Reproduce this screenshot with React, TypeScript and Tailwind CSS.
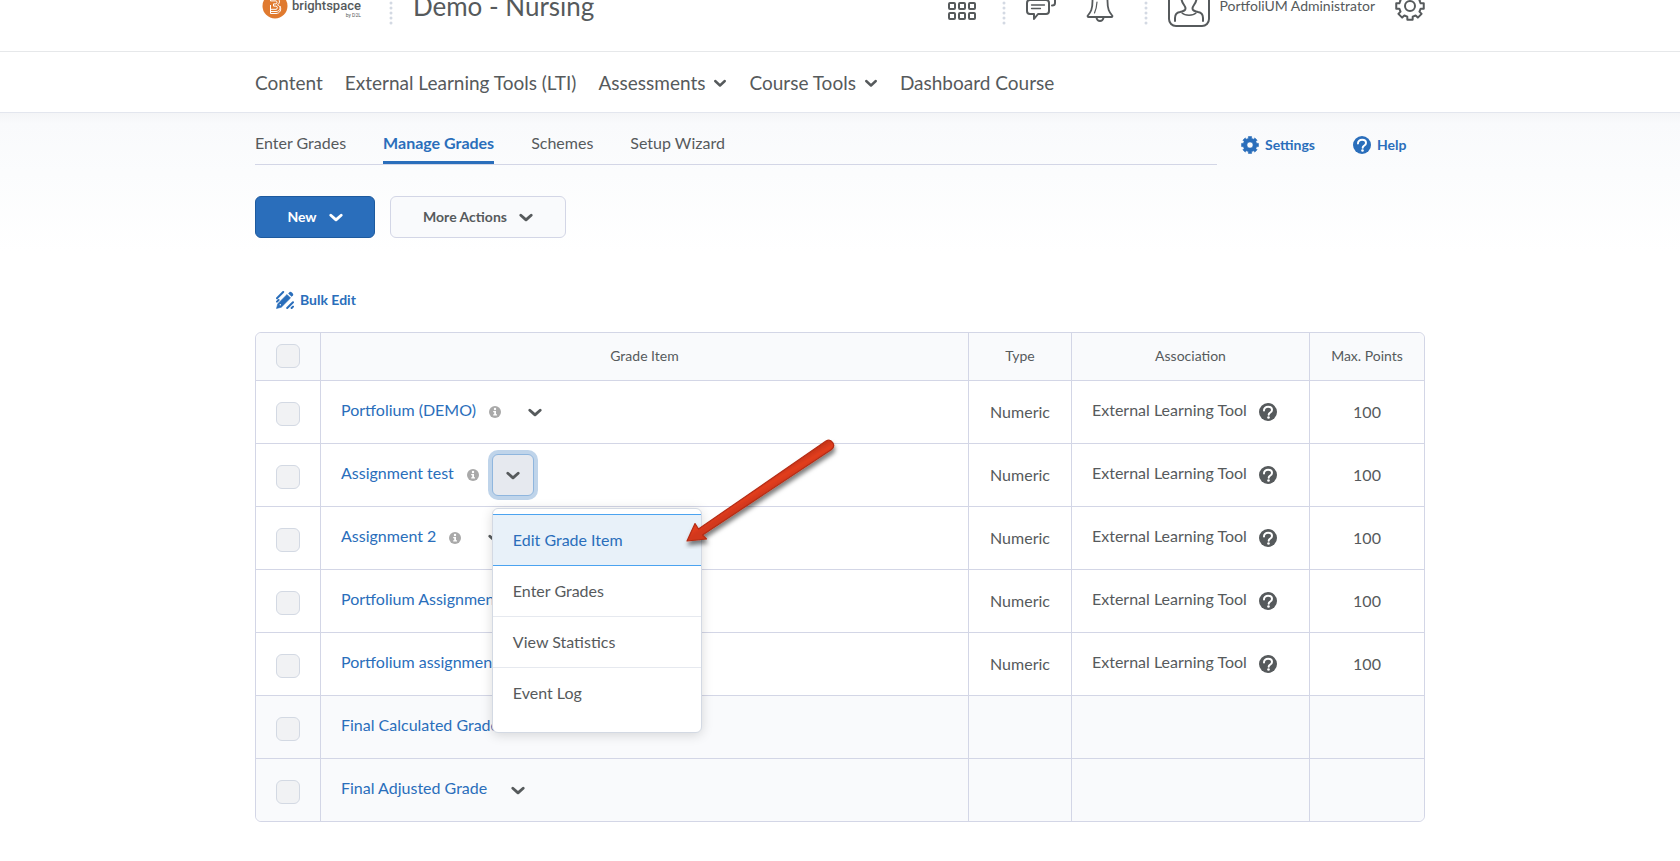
import React from "react";

function Chevron({ className = "", thin = false }: { className?: string; thin?: boolean }) {
  return (
    <svg viewBox="0 0 14 9" width="14" height="9" className={className} fill="none" stroke="currentColor" strokeWidth={thin ? 2.4 : 2.8} strokeLinecap="round" strokeLinejoin="round" aria-hidden="true">
      <path d={thin ? "M2.2 2 7 6.5 11.8 2" : "M1.8 2.2 7 6.9 12.2 2.2"} />
    </svg>
  );
}

function HelpIcon() {
  return (
    <svg viewBox="0 0 18 18" width="18" height="18" className="shrink-0" aria-hidden="true">
      <circle cx="9" cy="9" r="9" fill="currentColor" />
      <path d="M5 7.400C4.900 5 6.800 3.700 9.100 3.700s3.900 1.200 3.900 3.200c0 1.700-1.100 2.300-2.100 2.900-.9.600-1.200 1-1.200 1.900" fill="none" stroke="#fff" strokeWidth="2" strokeLinecap="round" />
      <circle cx="9.500" cy="14.500" r="1.300" fill="#fff" />
    </svg>
  );
}

function InfoIcon() {
  return (
    <svg viewBox="0 0 12 12" width="12" height="12" className="shrink-0 text-[#a9a9a9]" aria-hidden="true">
      <circle cx="6" cy="6" r="6" fill="currentColor" />
      <circle cx="6" cy="3" r="1.200" fill="#fff" />
      <path d="M4.200 5h2.800v3.200h1v1.300H4.200V8.200h1V6.200h-1z" fill="#fff" />
    </svg>
  );
}

function gearPath(c: number, outer: number, inner: number) {
  const pts: string[] = [];
  for (let i = 0; i < 8; i++) {
    const a = (i * Math.PI) / 4;
    const seq: [number, number][] = [[-0.25, inner], [-0.19, outer], [0.19, outer], [0.25, inner]];
    for (const [d, r] of seq) {
      pts.push(`${(c + r * Math.sin(a + d)).toFixed(2)} ${(c - r * Math.cos(a + d)).toFixed(2)}`);
    }
  }
  return `M${pts.join("L")}Z`;
}

function SettingsIcon() {
  return (
    <svg viewBox="0 0 18 18" width="18" height="18" aria-hidden="true">
      <path d={`${gearPath(9, 8.6, 6.8)}M9 5.9a3.1 3.1 0 1 0 0 6.2a3.1 3.1 0 1 0 0-6.2Z`} fill="currentColor" stroke="currentColor" strokeWidth="0.6" strokeLinejoin="round" fillRule="evenodd" />
    </svg>
  );
}

function HeaderGear() {
  return (
    <svg viewBox="0 0 30 30" width="30" height="30" fill="none" stroke="currentColor" strokeWidth="2" strokeLinejoin="round" aria-hidden="true">
      <path d={gearPath(15, 14, 11)} />
      <circle cx="15" cy="15" r="5" />
    </svg>
  );
}

function GridIcon() {
  return (
    <svg viewBox="0 0 28 28" width="28" height="28" fill="none" stroke="currentColor" strokeWidth="2" aria-hidden="true">
      {[1, 11, 21].map((y) => [1, 11, 21].map((x) => <rect key={`${x}-${y}`} x={x} y={y} width="6" height="6" rx="1" />))}
    </svg>
  );
}

function ChatIcon() {
  return (
    <svg viewBox="0 0 30 30" width="30" height="30" fill="none" stroke="currentColor" strokeWidth="2" strokeLinejoin="round" strokeLinecap="round" aria-hidden="true">
      <path d="M4 9h16a3 3 0 0 1 3 3v8a3 3 0 0 1-3 3h-8l-4 5v-5H4a3 3 0 0 1-3-3v-8a3 3 0 0 1 3-3Z" />
      <path d="M7 5V4a3 3 0 0 1 3-3h16a3 3 0 0 1 3 3v8c0 1.500-1 2.500-3 2.500" />
      <path d="M5.500 14h13M5.500 17.500h9" strokeWidth="1.300" />
    </svg>
  );
}

function BellIcon() {
  return (
    <svg viewBox="0 0 28 32" width="28" height="32" fill="none" stroke="currentColor" strokeWidth="1.800" strokeLinejoin="round" strokeLinecap="round" aria-hidden="true">
      <path d="M14 2c-5 0-7.500 4-7.500 9 0 8-1.500 11-5 15 0 .8.500 1 1 1h23c.5 0 1-.2 1-1-3.500-4-5-7-5-15 0-5-2.500-9-7.500-9Z" />
      <path d="M10.500 28c.5 2 2 3 3.500 3s3-1 3.500-3" />
      <path d="M11 12c-.3 5-.8 7-2.500 11" strokeWidth="1.200" />
    </svg>
  );
}

function AvatarIcon() {
  return (
    <svg viewBox="0 0 42 42" width="42" height="42" fill="none" stroke="currentColor" strokeWidth="2" strokeLinecap="round" strokeLinejoin="round" aria-hidden="true">
      <rect x="1" y="1" width="40" height="40" rx="7" />
      <path d="M7 36v-3c0-4 2-5.500 5-6 4-1 5.500-1.500 5.500-3.500 0-3-4-5-4-10C13.500 9 17 7 21 7s7.500 2 7.500 6.500c0 5-4 7-4 10 0 2 1.500 2.500 5.500 3.500 3 .5 5 2 5 6v3" />
      <path d="M14 28c3 3 11 3 14 0" strokeWidth="1.400" />
    </svg>
  );
}

function BrandMark() {
  return (
    <svg viewBox="0 0 26 26" width="26" height="26" aria-hidden="true">
      <circle cx="13" cy="13" r="12.500" fill="#e07a2f" />
      <g fill="none" stroke="#fff" strokeWidth="1" strokeLinejoin="round">
        <path d="M8.500 5h5.500c4 0 4.500 5.500 1.500 6.800 4 1.500 3 6.700-1.500 6.700H8.500v-2.200H14c1.800 0 1.800-3.200 0-3.200h-2.500V10.900H14c1.300 0 1.300-3 0-3H8.500Z" />
        <path d="M8.500 12v8.500H14c4 0 5.800-4 4-7.500" />
      </g>
    </svg>
  );
}

function BulkEditIcon() {
  return (
    <svg viewBox="0 0 18 18" width="18" height="18" aria-hidden="true">
      <path d="M.5 17.500 1.800 12.700 11 3.500l3.500 3.500L5.300 16.200Z" fill="currentColor" stroke="currentColor" strokeWidth="0.600" strokeLinejoin="round" />
      <path d="M12.200 2.400l1.500-1.500c1.100-1 4.400 2.300 3.400 3.400l-1.500 1.500Z" fill="currentColor" />
      <circle cx="4.300" cy="13.700" r="0.700" fill="#fff" />
      <path d="M1 7.200 7.200 1M1 10.600 2.600 9M11.200 17 17 11.200M15.600 17 17 15.600" stroke="currentColor" strokeWidth="2" strokeLinecap="round" />
    </svg>
  );
}

function Dots() {
  return (
    <svg viewBox="0 0 4 38" width="4" height="38" fill="#d3d9e3" aria-hidden="true">
      {[1, 6, 11, 16, 21, 26, 31, 36].map((y) => <circle key={y} cx="2" cy={y} r="1.500" />)}
    </svg>
  );
}

const boxClass = "block size-6 appearance-none rounded-md border border-[#d3d9e3] bg-[#f1f2f4]";
const cell = "border-l border-[#d3d6e6]";

type Row = { name: string; info?: boolean; open?: boolean; external?: boolean };

const rows: Row[] = [
  { name: "Portfolium (DEMO)", info: true, external: true },
  { name: "Assignment test", info: true, open: true, external: true },
  { name: "Assignment 2", info: true, external: true },
  { name: "Portfolium Assignment", info: true, external: true },
  { name: "Portfolium assignment 2", info: true, external: true },
  { name: "Final Calculated Grade" },
  { name: "Final Adjusted Grade" },
];

function ItemMenu() {
  const base = "flex h-[51px] items-center px-5 text-base";
  return (
    <div role="menu" className="absolute top-[54px] left-0 z-10 w-[210px] rounded-md border border-[#d3d9e3] bg-white pt-[5px] pb-[13px] shadow-[0_2px_12px_rgba(0,0,0,0.15)]">
      <a role="menuitem" href="#edit" className="flex h-[52px] items-center border-y border-[#4ba3f0] bg-[#e8f1f9] px-5 text-base text-[#2a6ebb]">Edit Grade Item</a>
      <a role="menuitem" href="#enter" className={`${base} border-b border-[#e6e9ef]`}>Enter Grades</a>
      <a role="menuitem" href="#stats" className={`${base} border-b border-[#e6e9ef]`}>View Statistics</a>
      <a role="menuitem" href="#log" className={`${base} border-b border-transparent`}>Event Log</a>
      <svg viewBox="0 0 160 116" width="160" height="116" className="pointer-events-none absolute -top-[76px] left-[188px]" aria-hidden="true">
        <defs>
          <linearGradient id="shaft" gradientUnits="userSpaceOnUse" x1="78" y1="50" x2="84" y2="60">
            <stop offset="0" stopColor="#c93518" />
            <stop offset="0.5" stopColor="#e23d1e" />
            <stop offset="1" stopColor="#d2371a" />
          </linearGradient>
          <filter id="cast" x="-10%" y="-10%" width="130%" height="130%">
            <feDropShadow dx="1" dy="4" stdDeviation="2" floodColor="#000" floodOpacity="0.5" />
          </filter>
        </defs>
        <path filter="url(#cast)" d="M6 108 14 90.500 17.500 96 145 8c5.500-3 10.500 4.500 5.500 8.500L21.500 102 25.500 106Z" fill="url(#shaft)" stroke="#b52c14" strokeWidth="1.200" strokeLinejoin="round" />
      </svg>
    </div>
  );
}

function GradeRow({ row, last }: { row: Row; last: boolean }) {
  const line = last ? "" : "border-b border-[#d3d6e6]";
  return (
    <tr className={`${last ? "h-[62px]" : "h-[63px]"} ${row.external ? "bg-white" : "bg-[#f9fafc]"}`}>
      <td className={`pt-1 pl-5 ${line} ${last ? "rounded-bl-md" : ""}`}>
        <input type="checkbox" aria-label={`Select ${row.name}`} className={boxClass} />
      </td>
      <td className={`${cell} pl-5 ${line}`}>
        <div className="flex items-center whitespace-nowrap">
          <a href="#item" className="pb-1 text-[#2a6ebb]">{row.name}</a>
          {row.info && <span className="ml-[13px]"><InfoIcon /></span>}
          <div className={row.info ? "relative ml-[13px]" : "relative ml-2.5"}>
            <button
              type="button"
              aria-label={`Actions for ${row.name}`}
              className={`flex size-[42px] items-center justify-center rounded-md border ${row.open ? "border-[#8fb6de] bg-[#e6e9ef] shadow-[0_0_0_4px_#bfd4ea]" : "border-transparent"}`}
            >
              <Chevron />
            </button>
            {row.open && <ItemMenu />}
          </div>
        </div>
      </td>
      <td className={`${cell} text-center ${line}`}>{row.external && "Numeric"}</td>
      <td className={`${cell} pl-5 ${line}`}>
        {row.external && (
          <div className="flex items-center gap-3 whitespace-nowrap">
            <span className="pb-1">External Learning Tool</span>
            <HelpIcon />
          </div>
        )}
      </td>
      <td className={`${cell} text-center ${line} ${last ? "rounded-br-md" : ""}`}>{row.external && "100"}</td>
    </tr>
  );
}

export default function App() {
  const head = `${cell} border-b pb-0.5 font-normal`;
  return (
    <div className="min-h-screen bg-white font-['Lato',sans-serif] text-base text-[#565a5c]">
      <header className="-mt-[39px] border-b border-[#e6e8ea] bg-white">
        <div className="mx-auto flex h-[90px] max-w-[1170px] items-center">
          <a href="#home" className="flex items-center pl-[7px]" aria-label="Brightspace home">
            <BrandMark />
            <span className="relative ml-1 font-['Roboto',sans-serif] text-[13px] leading-5 font-medium">
              brightspace
              <span className="absolute top-[15px] right-0 text-[5px] leading-2 font-normal">by D2L</span>
            </span>
          </a>
          <span className="ml-7"><Dots /></span>
          <h1 className="ml-5 text-[26px] leading-8">Demo - Nursing</h1>
          <div className="ml-auto flex items-center">
            <button type="button" aria-label="Course selector"><GridIcon /></button>
            <span className="ml-[26px]"><Dots /></span>
            <button type="button" aria-label="Messages" className="ml-5"><ChatIcon /></button>
            <button type="button" aria-label="Notifications" className="ml-[30px]"><BellIcon /></button>
            <span className="mr-5 ml-[30px]"><Dots /></span>
            <button type="button" className="flex items-center gap-2.5 text-sm">
              <AvatarIcon />
              PortfoliUM Administrator
            </button>
            <button type="button" aria-label="Admin tools" className="ml-5"><HeaderGear /></button>
          </div>
        </div>
      </header>
      <nav className="border-b border-[#e3e6ee] bg-white">
        <div className="mx-auto flex h-[60px] max-w-[1170px] items-center gap-[22px] pt-0.5 text-[19px]">
          <a href="#content">Content</a>
          <a href="#lti">External Learning Tools (LTI)</a>
          <button type="button" className="flex items-center gap-2">Assessments <Chevron thin /></button>
          <button type="button" className="flex items-center gap-2">Course Tools <Chevron thin /></button>
          <a href="#dashboard">Dashboard Course</a>
        </div>
      </nav>
      <main className="bg-[linear-gradient(#f4f5f7_0px,#f9fafc_10px,#fbfcfd_60px,#ffffff_140px)]">
        <div className="mx-auto max-w-[1170px] pb-9">
          <div className="flex items-start">
            <div className="flex h-[52px] w-[962px] items-end gap-[37px] border-b border-[#d3d6e6]">
              <a href="#enter-grades" className="h-[33px]">Enter Grades</a>
              <a href="#manage" aria-current="page" className="h-[33px] border-b-3 border-[#2a6ebb] font-bold text-[#2a6ebb]">Manage Grades</a>
              <a href="#schemes" className="h-[33px]">Schemes</a>
              <a href="#wizard" className="h-[33px]">Setup Wizard</a>
            </div>
            <div className="flex gap-[38px] pt-[22px] pl-6 text-sm font-bold text-[#2a6ebb]">
              <a href="#settings" className="flex items-center gap-1.5"><SettingsIcon />Settings</a>
              <a href="#help" className="flex items-center gap-1.5"><HelpIcon />Help</a>
            </div>
          </div>
          <div className="mt-[31px] flex gap-[15px] text-sm font-bold">
            <button type="button" className="flex h-[42px] w-[120px] items-center justify-center gap-3 rounded-md border border-[#1d5a9e] bg-[#2a6ebb] text-white">New <Chevron /></button>
            <button type="button" className="flex h-[42px] w-[176px] items-center justify-center gap-3 rounded-md border border-[#d3d6e6] bg-[#f9fafc]">More Actions <Chevron /></button>
          </div>
          <button type="button" className="mt-[51px] ml-[21px] flex h-[22px] items-center gap-1.5 text-sm font-bold text-[#2a6ebb]"><BulkEditIcon />Bulk Edit</button>
          <div className="mt-[21px] rounded-md border border-[#d3d6e6]">
            <table className="w-full table-fixed border-separate border-spacing-0 rounded-md">
              <colgroup>
                <col className="w-[64px]" />
                <col />
                <col className="w-[103px]" />
                <col className="w-[238px]" />
                <col className="w-[115px]" />
              </colgroup>
              <thead>
                <tr className="h-12 bg-[#f9fafc] text-sm">
                  <th className="rounded-tl-md border-b border-[#d3d6e6] pb-0.5 pl-5"><input type="checkbox" aria-label="Select all" className={boxClass} /></th>
                  <th className={head}>Grade Item</th>
                  <th className={head}>Type</th>
                  <th className={head}>Association</th>
                  <th className={`${head} rounded-tr-md`}>Max. Points</th>
                </tr>
              </thead>
              <tbody>
                {rows.map((row, i) => <GradeRow key={row.name} row={row} last={i === rows.length - 1} />)}
              </tbody>
            </table>
          </div>
        </div>
      </main>
    </div>
  );
}
